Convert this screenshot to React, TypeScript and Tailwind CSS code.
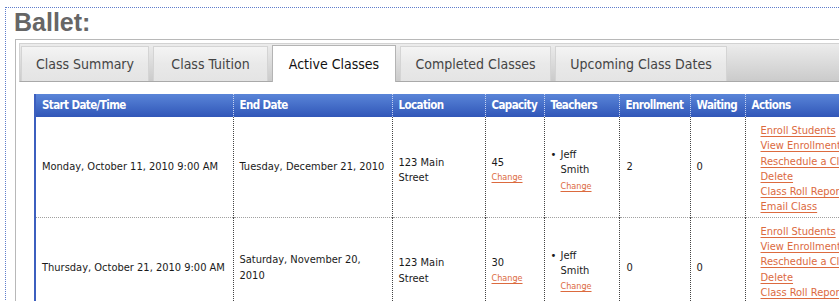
import React from "react";

const tabs = [
  { label: "Class Summary", w: "w-[128px]" },
  { label: "Class Tuition", w: "w-[115px]" },
  { label: "Active Classes", w: "w-[124px]", active: true },
  { label: "Completed Classes", w: "w-[151px]" },
  { label: "Upcoming Class Dates", w: "w-[172px]" },
];

const actions = [
  "Enroll Students",
  "View Enrollment",
  "Reschedule a Class",
  "Delete",
  "Class Roll Report",
  "Email Class",
];

const rows = [
  {
    start: "Monday, October 11, 2010 9:00 AM",
    end: ["Tuesday, December 21, 2010"],
    capacity: "45",
    enrollment: "2",
    waiting: "0",
  },
  {
    start: "Thursday, October 21, 2010 9:00 AM",
    end: ["Saturday, November 20,", "2010"],
    capacity: "30",
    enrollment: "0",
    waiting: "0",
  },
];

const headers = [
  { label: "Start Date/Time", w: "w-[198px]" },
  { label: "End Date", w: "w-[159px]" },
  { label: "Location", w: "w-[93px]" },
  { label: "Capacity", w: "w-[59px]" },
  { label: "Teachers", w: "w-[75px]" },
  { label: "Enrollment", w: "w-[71px]" },
  { label: "Waiting", w: "w-[55px]" },
  { label: "Actions", w: "w-[160px]" },
];

const font = "font-['DejaVu_Sans_Condensed','DejaVu_Sans',sans-serif]";
const link = "text-[#dc6a3e] underline decoration-[#dc6a3e] underline-offset-2";
const cell = "border-l border-dotted border-[#444] pl-[6px] pr-[4px] align-middle";

export default function App() {
  return (
    <div className={`w-[839px] h-[301px] overflow-hidden bg-white ${font}`}>
      <div className="ml-[5px] mt-[7px] w-[1000px] border-l border-t border-dotted border-[#5f7dcc] pl-[7px]">
        <h1 className="pl-[1px] pt-[2px] font-['Liberation_Sans',sans-serif] text-[25px] font-bold leading-[25px] text-[#666]">
          Ballet:
        </h1>

        {/* tab panel */}
        <div className="ml-[2px] mt-[4px] border border-[#b8b8b8] p-[3px] pb-[40px]">
          <div className="flex h-[39px] items-end gap-[4px] border border-b-[#a9a9a9] border-[#d2d2d2] bg-gradient-to-b from-[#ececec] to-[#cbcbcb] pl-[1px]">
            {tabs.map((t) =>
              t.active ? (
                <div
                  key={t.label}
                  className={`${t.w} relative -mb-px flex h-[37px] items-center justify-center border border-b-0 border-[#b4b4b4] bg-white text-[14px] text-[#111]`}
                >
                  {t.label}
                </div>
              ) : (
                <div
                  key={t.label}
                  className={`${t.w} flex h-[35px] items-center justify-center border border-b-0 border-[#d4d4d4] bg-gradient-to-b from-[#f4f4f4] via-[#e9e9e9] to-[#e4e4e4] text-[14px] text-[#444]`}
                >
                  {t.label}
                </div>
              )
            )}
          </div>

          <table className="ml-[15px] mt-[12px] table-fixed border-collapse text-[11px] text-[#1a1a1a]">
            <thead>
              <tr className="h-[23px] bg-gradient-to-b from-[#5a85d8] to-[#3156b8]">
                {headers.map((h, i) => (
                  <th
                    key={h.label}
                    className={`${h.w} pl-[6px] text-left text-[11.5px] font-bold tracking-[-0.6px] text-white ${
                      i === 0 ? "border-l-2 border-solid border-[#3c5fbf]" : "border-l border-dotted border-[#c5d2f2]"
                    }`}
                  >
                    {h.label}
                  </th>
                ))}
              </tr>
            </thead>
            <tbody>
              {rows.map((r) => (
                <tr key={r.start} className="border-b border-dotted border-[#a0a0a0] leading-[15.3px]">
                  <td className="border-l-2 border-solid border-[#3c5fbf] pl-[6px] align-middle">{r.start}</td>
                  <td className={cell}>
                    {r.end.map((e) => (
                      <div key={e}>{e}</div>
                    ))}
                  </td>
                  <td className={`${cell} pt-[6px]`}>
                    123 Main
                    <br />
                    Street
                  </td>
                  <td className={`${cell} pt-[6px]`}>
                    <div>{r.capacity}</div>
                    <div className={`text-[9px] ${link}`}>Change</div>
                  </td>
                  <td className={`${cell} pt-[7px]`}>
                    <div className="flex">
                      <span className="w-[10px]">•</span>
                      <div>
                        Jeff
                        <br />
                        Smith
                      </div>
                    </div>
                    <div className={`pl-[10px] text-[9px] leading-[16px] ${link}`}>Change</div>
                  </td>
                  <td className={`${cell} pl-[7px]`}>{r.enrollment}</td>
                  <td className={cell}>{r.waiting}</td>
                  <td className={`${cell} pl-[15px] pt-[6px] pb-[2px] whitespace-nowrap`}>
                    {actions.map((a) => (
                      <div key={a}>
                        <span className={link}>{a}</span>
                      </div>
                    ))}
                  </td>
                </tr>
              ))}
            </tbody>
          </table>
        </div>
      </div>
    </div>
  );
}
